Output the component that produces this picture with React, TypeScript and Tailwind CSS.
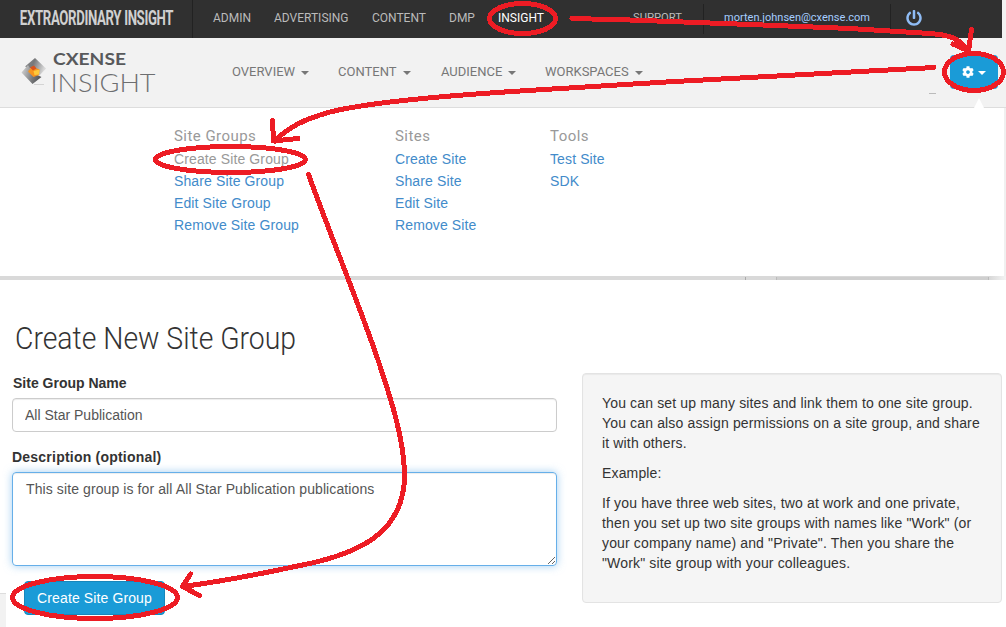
import { FaCog, FaPowerOff } from "react-icons/fa";

const topLinks = [
  { label: "ADMIN", width: "w-[61px]" },
  { label: "ADVERTISING", width: "w-[98px]" },
  { label: "CONTENT", width: "w-[77px]" },
  { label: "DMP", width: "w-[49px]" },
  { label: "INSIGHT", width: "w-[135px]", active: true },
];

const mainLinks = [
  { label: "OVERVIEW", width: "w-[106px]" },
  { label: "CONTENT", width: "w-[103px]" },
  { label: "AUDIENCE", width: "w-[104px]" },
  { label: "WORKSPACES", width: "w-[120px]" },
];

const menu = [
  {
    title: "Site Groups",
    width: "w-[221px]",
    links: ["Create Site Group", "Share Site Group", "Edit Site Group", "Remove Site Group"],
  },
  {
    title: "Sites",
    width: "w-[155px]",
    links: ["Create Site", "Share Site", "Edit Site", "Remove Site"],
  },
  { title: "Tools", width: "w-[155px]", links: ["Test Site", "SDK"] },
];

function Caret({ className = "" }: { className?: string }) {
  return (
    <span
      className={`inline-block border-x-4 border-t-4 border-x-transparent ${className}`}
    />
  );
}

function Logo() {
  return (
    <svg width="140" height="58" viewBox="0 -4 140 58" className="shrink-0">
      <defs>
        <linearGradient id="top" x1="0" y1="0" x2="1" y2="0.3">
          <stop offset="0" stopColor="#8a8b8d" />
          <stop offset="0.45" stopColor="#77787a" />
          <stop offset="1" stopColor="#d8d8d8" />
        </linearGradient>
        <linearGradient id="bottom" x1="0" y1="0" x2="1" y2="0.3">
          <stop offset="0" stopColor="#dcdcdc" />
          <stop offset="0.7" stopColor="#77787a" />
          <stop offset="1" stopColor="#58595b" />
        </linearGradient>
      </defs>
      <path d="M4 17.500 14 9 25 19.500 18 27 13.500 21Z" fill="url(#top)" />
      <path d="M0.500 23.500 7 16 12 24 20.500 28 11.500 35Z" fill="url(#bottom)" />
      <path d="M7 22.500 11 17.500 18.500 20.500 18 26 12.500 28Z" fill="#f7941e" />
      <path d="M9 18.500 13 16.500 15.500 19.500 12 21.500Z" fill="#d9531e" />
      <path d="M12.500 22 18.500 20.500 18 25.500 13.500 26Z" fill="#fdc93a" />
      <path d="M13 35.500h10" stroke="#d4d4d4" />
      <text x="32" y="16" textLength="73" lengthAdjust="spacingAndGlyphs" className="fill-[#58595b] font-['Lato'] text-[17.5px] font-bold">
        CXENSE
      </text>
      <text x="29.500" y="42.500" textLength="105" lengthAdjust="spacingAndGlyphs" className="fill-[#6d6e70] font-['Lato'] text-[25.5px] font-light">
        INSIGHT
      </text>
    </svg>
  );
}

function TopBar() {
  return (
    <div className="mr-1 flex h-[38px] items-center bg-[#303030] font-['Roboto'] text-[12px] text-[#bbb]">
      <div className="h-full w-[193px] border-r border-[#222]">
        <svg width="190" height="38">
          <text
            x="31.5"
            y="25.500"
            transform="scale(0.63 1)"
            textLength="244"
            className="fill-[#d0d0d0] font-['Roboto'] text-[21px] font-bold"
          >
            EXTRAORDINARY INSIGHT
          </text>
        </svg>
      </div>
      <nav className="flex items-center pb-[2px] pl-[20px]">
        {topLinks.map((link) => (
          <a key={link.label} className={`${link.width} ${link.active ? "text-white" : ""}`}>
            {link.label}
          </a>
        ))}
        <a className="w-[70px] text-[11.2px]">SUPPORT</a>
      </nav>
      <div className="flex h-[30px] w-[188px] items-center justify-center border-x border-[#222] pb-[2px] text-[11px] text-[#a5cdff]">
        morten.johnsen@cxense.com
      </div>
      <FaPowerOff className="mb-[3px] ml-[15px] size-4 text-[#8fbcf5]" />
    </div>
  );
}

function Header() {
  return (
    <header className="flex h-[70px] border-b border-[#ddd] bg-[#f2f2f2] font-['Roboto']">
      <div className="w-[232px] pt-[7px] pl-[21px]">
        <Logo />
      </div>
      <nav className="flex items-center pb-[2px] text-[13px] text-[#777]">
        {mainLinks.map((link) => (
          <a key={link.label} className={`${link.width} flex items-center gap-[6px]`}>
            {link.label}
            <Caret className="mt-[3px] border-t-[#777]" />
          </a>
        ))}
      </nav>
      <div className="mt-[55px] ml-auto h-px w-[7px] bg-[#bbb]" />
      <div className="relative mr-2 ml-[14px] w-12 pt-[17px]">
        <button className="flex h-[34px] w-full items-center justify-center gap-1 rounded bg-[#1a9bd7] text-white">
          <FaCog className="size-3" />
          <Caret className="mt-[2px] border-t-white" />
        </button>
        <span className="absolute -bottom-px left-6 border-x-[5px] border-b-[10px] border-x-transparent border-b-white" />
      </div>
    </header>
  );
}

function SettingsMenu() {
  return (
    <div>
      <div className="flex h-[168px] border-r-2 border-[#f0f0f0] pt-4 pl-[174px]">
        {menu.map((group, i) => (
          <div key={group.title} className={group.width}>
            <h3 className="h-6 font-['Roboto'] text-[15px] leading-6 tracking-[0.45px] text-[#999]">
              {group.title}
            </h3>
            <ul className="text-[14px] leading-[22px] tracking-[0.12px] text-[#428bca]">
              {group.links.map((link, j) => (
                <li key={link} className={i === 0 && j === 0 ? "text-[#999]" : ""}>
                  {link}
                </li>
              ))}
            </ul>
          </div>
        ))}
      </div>
      <div className="flex h-1 bg-[#d9d9d9]">
        <div className="mt-px ml-[745px] w-px bg-[#aaa]" />
        <div className="mt-px ml-[30px] w-[213px] border-x border-[#bbb] bg-[#cfcfcf]" />
        <div className="ml-auto w-4 bg-linear-to-r from-[#d9d9d9] to-[#f4f4f4]" />
      </div>
    </div>
  );
}

function GroupForm() {
  return (
    <form className="w-[545px]">
      <label className="block pl-px text-[14px] leading-5 font-bold text-[#333]">
        Site Group Name
      </label>
      <input
        defaultValue="All Star Publication"
        className="mt-[5px] block h-[34px] w-full rounded border border-[#ccc] px-3 text-[14px] text-[#555] shadow-[inset_0_1px_1px_rgba(0,0,0,0.075)] outline-none"
      />
      <label className="mt-[15px] block text-[14px] leading-5 font-bold tracking-[0.22px] text-[#333]">
        Description (optional)
      </label>
      <textarea
        defaultValue="This site group is for all All Star Publication publications"
        className="mt-[5px] block h-[94px] w-full rounded border border-[#66afe9] px-[13px] py-[6px] text-[14px] leading-5 tracking-[0.1px] text-[#555] shadow-[inset_0_1px_1px_rgba(0,0,0,0.075),0_0_8px_rgba(102,175,233,0.6)] outline-none"
      />
      <button
        type="button"
        className="mt-[15px] ml-3 block h-[34px] w-[141px] rounded border border-[#1787bb] bg-[#1a9bd7] text-[14px] tracking-[0.12px] text-white"
      >
        Create Site Group
      </button>
    </form>
  );
}

function HelpBox() {
  return (
    <aside className="ml-[25px] h-[230px] w-[420px] space-y-[10px] rounded border border-[#e3e3e3] bg-[#f5f5f5] p-[19px] text-[14px] leading-5 tracking-[0.15px] text-[#333] shadow-[inset_0_1px_1px_rgba(0,0,0,0.05)]">
      <p>
        You can set up many sites and link them to one site group.
        <br />
        You can also assign permissions on a site group, and share
        <br />
        it with others.
      </p>
      <p>Example:</p>
      <p>
        If you have three web sites, two at work and one private,
        <br />
        then you set up two site groups with names like "Work" (or
        <br />
        your company name) and "Private". Then you share the
        <br />
        "Work" site group with your colleagues.
      </p>
    </aside>
  );
}

// Hand-drawn walkthrough marks on top of the page
function Annotations() {
  return (
    <svg
      width="1006"
      height="627"
      className="pointer-events-none absolute top-0 left-0 fill-none stroke-[#ed1c24] stroke-5"
      strokeLinecap="round"
      strokeLinejoin="round"
      shapeRendering="crispEdges"
    >
      <ellipse cx="522.5" cy="18.5" rx="33" ry="15" />
      <path d="M572 18.500 630 20 750 24.500 850 28.500 930 33.500C950 35 958 38 968 50" />
      <path d="M953 44 968.500 51 971.500 29.500" />
      <ellipse cx="974" cy="72" rx="29.500" ry="18.500" />
      <path d="M934 67.500 666 82 520 91C440 96 370 102 330 112C305 119 288 127 275 141" />
      <path d="M272.500 120.500 273.500 141 298 138.500" />
      <ellipse cx="230.500" cy="159.5" rx="75" ry="13" />
      <path d="M308.500 174.500C330 234 362 312 378 360C392 402 404 440 404.500 474C405 532 360 554 300 565.500C265 573 225 581 183 586.500" />
      <path d="M190.500 574 182.500 586.500 199.500 595.500" />
      <ellipse cx="95" cy="597.5" rx="82.500" ry="21" />
    </svg>
  );
}

export default function App() {
  return (
    <div className="relative h-[627px] w-[1006px] overflow-hidden bg-white font-['Liberation_Sans',sans-serif]">
      <div className="bg-[#f2f2f2]">
        <TopBar />
      </div>
      <Header />
      <SettingsMenu />
      <main className="h-[347px] pt-[40px]">
        <h1 className="ml-[15px] h-[53px] w-80 origin-left scale-x-[0.9] font-['Roboto'] text-[31.5px] leading-[38px] font-light whitespace-nowrap text-[#333]">
          Create New Site Group
        </h1>
        <div className="flex">
          <div className="w-3 pt-[220px]">
            <div className="h-[34px] w-[6px] border-t border-[#ddd] bg-[#f2f2f2]" />
          </div>
          <GroupForm />
          <HelpBox />
        </div>
      </main>
      <Annotations />
    </div>
  );
}
